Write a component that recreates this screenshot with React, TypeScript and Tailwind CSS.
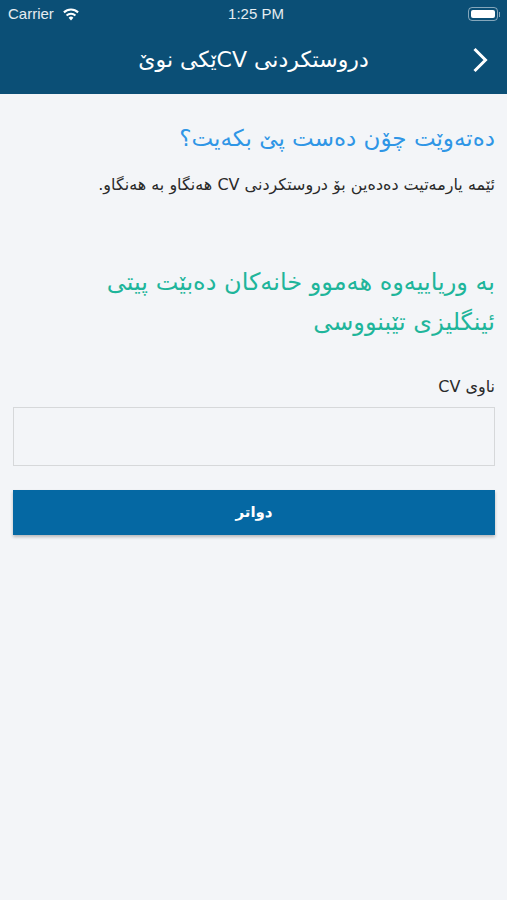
const arabic = "font-['DejaVu_Sans',sans-serif]";

const StatusBar = () => (
  <div className="h-7 pl-2 pr-[7px] flex items-center justify-between text-white/90 font-['Liberation_Sans',sans-serif] text-[15px]">
    <div className="flex items-center gap-2 w-[124px]">
      <span>Carrier</span>
      <svg width="18" height="13" viewBox="0 0 18 13" fill="white">
        <path d="M9 12.5 6.6 9.7a3.4 3.4 0 0 1 4.8 0L9 12.5Z" />
        <path d="M5.2 8.2 3.9 6.7a7.4 7.4 0 0 1 10.2 0l-1.3 1.5a5.4 5.4 0 0 0-7.6 0Z" />
        <path d="M2.6 5.2 1.2 3.6a11.3 11.3 0 0 1 15.6 0l-1.4 1.6a9.2 9.2 0 0 0-12.8 0Z" />
      </svg>
    </div>
    <span>1:25 PM</span>
    <div className="w-[120px] flex justify-end items-center">
      <div className="w-[30px] h-[14px] rounded-[4px] border border-white/50 p-[2px]">
        <div className="w-full h-full bg-white rounded-[2px]" />
      </div>
      <div className="w-[1.5px] h-[5px] bg-white/50 ml-[1px]" />
    </div>
  </div>
);

export default function App() {
  return (
    <div className="min-h-[900px] bg-[#f3f5f8]">
      <header className="h-[94px] bg-[#0b4f76]">
        <StatusBar />
        <div className="h-[62px] flex items-center justify-center relative">
          <h1 dir="rtl" className={`${arabic} text-white text-[22px]`}>
            دروستکردنی CVێکی نوێ
          </h1>
          <svg
            className="absolute right-[19px] top-[19px]"
            width="16"
            height="26"
            viewBox="0 0 16 26"
            fill="none"
            stroke="white"
            strokeWidth="3"
          >
            <path d="M2.5 2 13.5 13 2.5 24" />
          </svg>
        </div>
      </header>

      <main dir="rtl" className={`${arabic} pr-3 pl-[13px] pt-[28px]`}>
        <h2 className="text-[#2f96e6] text-[23px] leading-[32px]">دەتەوێت چۆن دەست پێ بکەیت؟</h2>
        <p className="text-[#2a2a2a] text-[16px] leading-[24px] mt-[19px]">
          ئێمە یارمەتیت دەدەین بۆ دروستکردنی CV هەنگاو بە هەنگاو.
        </p>

        <p className="text-[#1fb59b] text-[24px] leading-[40px] mt-[65px] max-w-[440px]">
          بە وریاییەوە هەموو خانەکان دەبێت پیتی ئینگلیزی تێبنووسی
        </p>

        <label className="block text-[#2a2a2a] text-[16px] leading-[20px] mt-[35px]">ناوی CV</label>
        <input
          dir="ltr"
          className="block w-full h-[59px] mt-[10px] border border-[#d6d8da] bg-[#f3f5f8] outline-none"
        />
        <button className="block w-full h-[45px] mt-[24px] bg-[#0568a3] text-white text-[15px] font-bold shadow-[0_2px_3px_rgba(0,0,0,0.25)]">
          دواتر
        </button>
      </main>
    </div>
  );
}
